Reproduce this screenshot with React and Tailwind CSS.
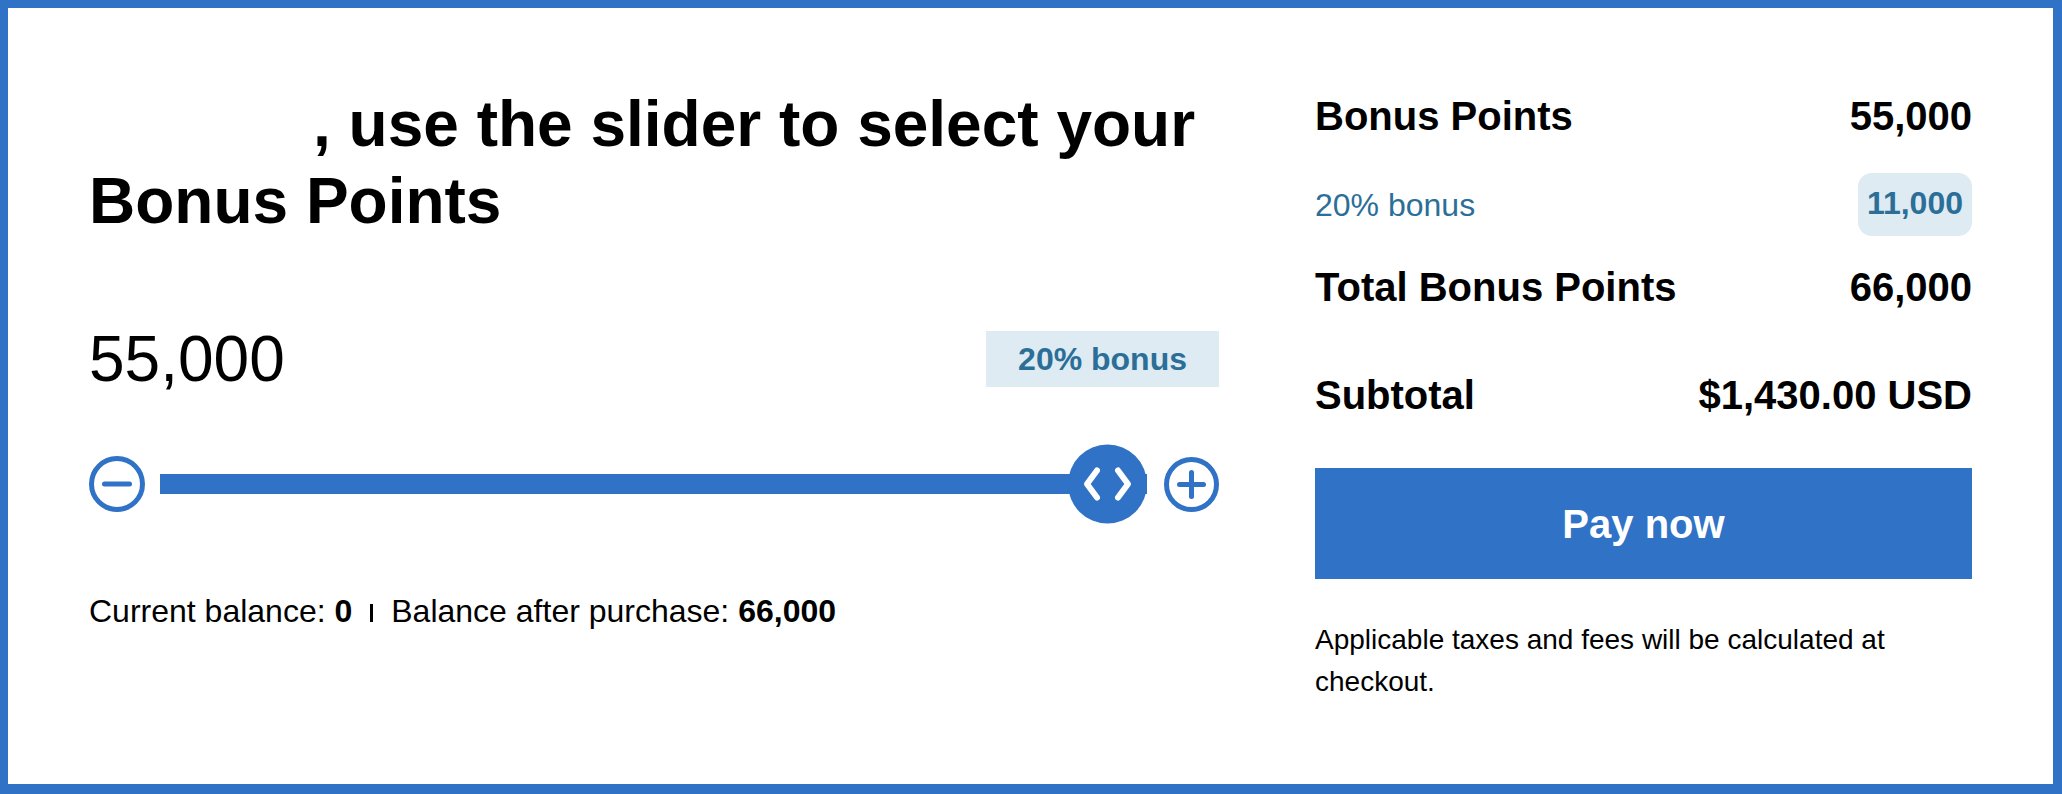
import React from 'react';

const BLUE = '#3072c6';

const MinusIcon = () => (
  <svg width="56" height="56" viewBox="0 0 56 56" className="shrink-0">
    <circle cx="28" cy="28" r="25.5" fill="none" stroke={BLUE} strokeWidth="5" />
    <line x1="15.5" y1="28" x2="40.5" y2="28" stroke={BLUE} strokeWidth="5" strokeLinecap="round" />
  </svg>
);

const PlusIcon = () => (
  <svg width="55" height="55" viewBox="0 0 55 55" className="shrink-0">
    <circle cx="27.5" cy="27.5" r="25" fill="none" stroke={BLUE} strokeWidth="5" />
    <line x1="15.5" y1="27.5" x2="39.5" y2="27.5" stroke={BLUE} strokeWidth="5" strokeLinecap="round" />
    <line x1="27.5" y1="15.5" x2="27.5" y2="39.5" stroke={BLUE} strokeWidth="5" strokeLinecap="round" />
  </svg>
);

const Knob = () => (
  <div className="absolute right-0 top-1/2 -translate-y-1/2 w-[79px] h-[79px] rounded-full bg-[#3072c6]">
    <svg width="79" height="79" viewBox="0 0 79 79">
      <path d="M29 26 L19 39.5 L29 53" fill="none" stroke="#fff" strokeWidth="6" strokeLinecap="round" strokeLinejoin="round" />
      <path d="M50 26 L60 39.5 L50 53" fill="none" stroke="#fff" strokeWidth="6" strokeLinecap="round" strokeLinejoin="round" />
    </svg>
  </div>
);

const SummaryRow = ({ label, value }) => (
  <div className="flex justify-between text-[40px] leading-[48px] font-bold text-black">
    <span>{label}</span>
    <span>{value}</span>
  </div>
);

const App = () => {
  return (
    <div className="h-[794px] bg-white border-[#3072c6] border-t-8 border-l-8 border-r-[9px] border-b-[10px] flex gap-[96px] px-[81px] pt-[78px] font-['Liberation_Sans',Arial,sans-serif] text-black">
      {/* left: slider */}
      <div className="w-[1130px] shrink-0">
        <h1 className="text-[64px] leading-[77px] font-bold">
          <span className="inline-block w-[224px]" />, use the slider to select your Bonus Points
        </h1>

        <div className="mt-[87px] flex items-center justify-between">
          <span className="text-[64px] leading-[64px]">55,000</span>
          <span className="h-[56px] px-[32px] bg-[#deebf2] text-[#2b6f98] text-[32px] leading-[56px] font-bold">
            20% bonus
          </span>
        </div>

        <div className="mt-[53px] h-[80px] flex items-center gap-[15px]">
          <MinusIcon />
          <div className="relative flex-1 h-[80px] flex items-center mr-[2px]">
            <div className="w-full h-[20px] bg-[#3072c6]" />
            <Knob />
          </div>
          <PlusIcon />
        </div>

        <p className="mt-[63px] text-[32px] leading-[48px]">
          Current balance: <b>0</b>
          <span className="inline-block align-baseline w-[3px] h-[18px] bg-black mx-[18px]" />
          Balance after purchase: <b>66,000</b>
        </p>
      </div>

      {/* right: summary */}
      <div className="flex-1 pt-[6px]">
        <SummaryRow label="Bonus Points" value="55,000" />

        <div className="mt-[33px] flex items-center justify-between text-[#2b6f98]">
          <span className="text-[32px] leading-[48px]">20% bonus</span>
          <span className="h-[63px] px-[9px] rounded-[14px] bg-[#deebf2] text-[32px] leading-[60px] font-bold">
            11,000
          </span>
        </div>

        <div className="mt-[27px]">
          <SummaryRow label="Total Bonus Points" value="66,000" />
        </div>

        <div className="mt-[60px]">
          <SummaryRow label="Subtotal" value="$1,430.00 USD" />
        </div>

        <button className="mt-[49px] w-full h-[111px] bg-[#3072c6] text-white text-[40px] leading-[48px] font-bold">
          Pay now
        </button>

        <p className="mt-[40px] text-[28px] leading-[42px]">
          Applicable taxes and fees will be calculated at checkout.
        </p>
      </div>
    </div>
  );
};

export default App;
